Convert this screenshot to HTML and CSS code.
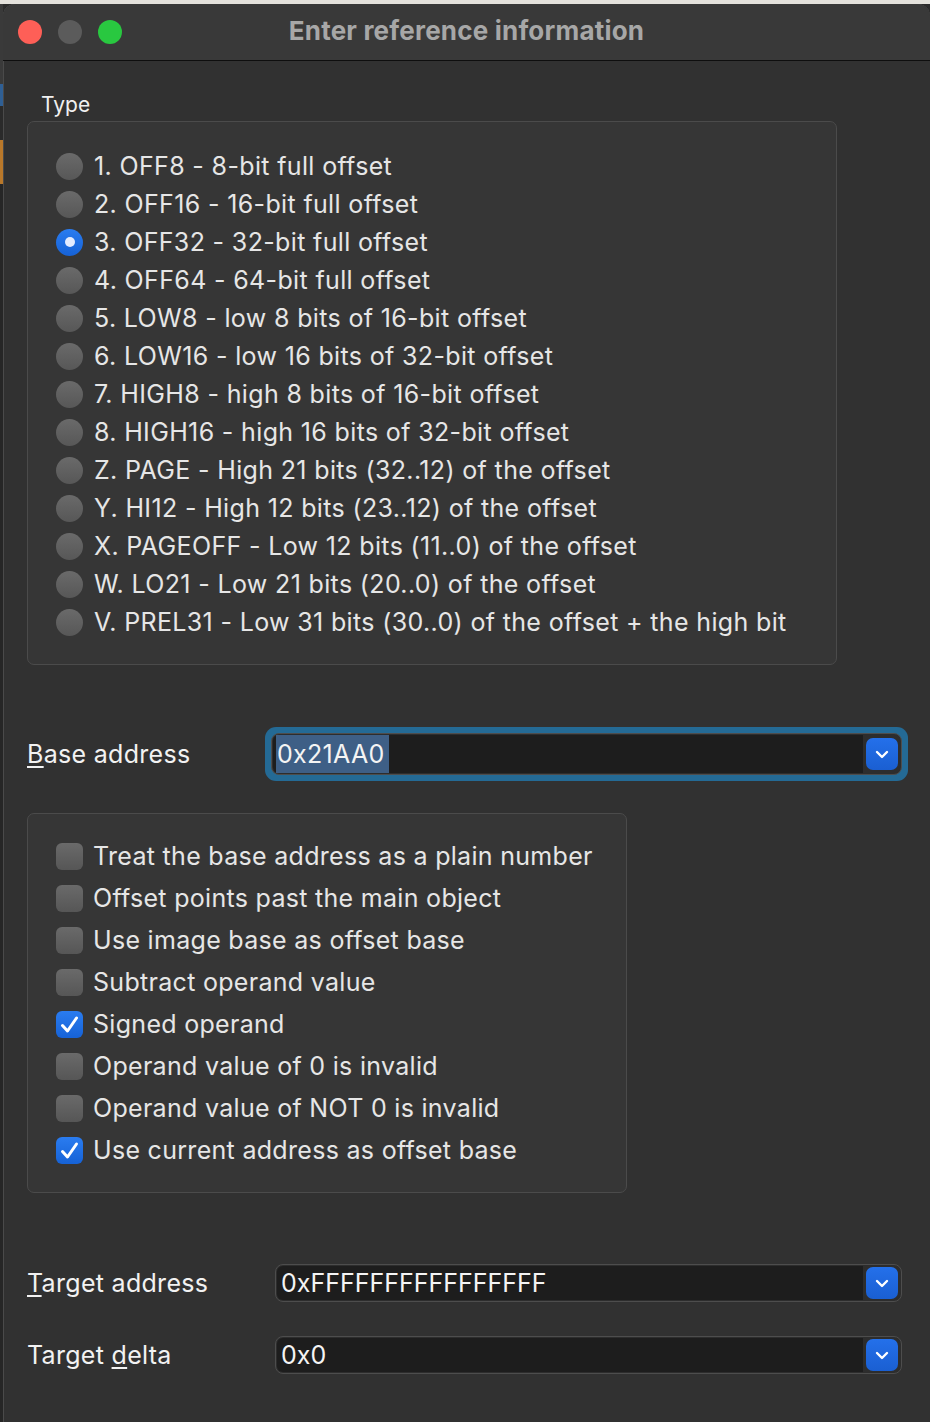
FILE: index.html
```html
<!DOCTYPE html>
<html lang="en">
<head>
<meta charset="utf-8">
<title>Enter reference information</title>
<link rel="stylesheet" href="styles.css">
</head>
<body>
<div class="screen">
  <div class="desk">
    <div class="behind"></div>
    <div class="window">
      <div class="titlebar">
        <div class="lights">
          <span class="light red"></span>
          <span class="light gray"></span>
          <span class="light green"></span>
        </div>
        <div class="title">Enter reference information</div>
        <div></div>
      </div>
      <div class="content">
        <div class="type-label">Type</div>
        <div class="group radios">
          <div class="row"><span class="radio"></span><span>1. OFF8 - 8-bit full offset</span></div>
          <div class="row"><span class="radio"></span><span>2. OFF16 - 16-bit full offset</span></div>
          <div class="row"><span class="radio on"></span><span>3. OFF32 - 32-bit full offset</span></div>
          <div class="row"><span class="radio"></span><span>4. OFF64 - 64-bit full offset</span></div>
          <div class="row"><span class="radio"></span><span>5. LOW8 - low 8 bits of 16-bit offset</span></div>
          <div class="row"><span class="radio"></span><span>6. LOW16 - low 16 bits of 32-bit offset</span></div>
          <div class="row"><span class="radio"></span><span>7. HIGH8 - high 8 bits of 16-bit offset</span></div>
          <div class="row"><span class="radio"></span><span>8. HIGH16 - high 16 bits of 32-bit offset</span></div>
          <div class="row"><span class="radio"></span><span>Z. PAGE - High 21 bits (32..12) of the offset</span></div>
          <div class="row"><span class="radio"></span><span>Y. HI12 - High 12 bits (23..12) of the offset</span></div>
          <div class="row"><span class="radio"></span><span>X. PAGEOFF - Low 12 bits (11..0) of the offset</span></div>
          <div class="row"><span class="radio"></span><span>W. LO21 - Low 21 bits (20..0) of the offset</span></div>
          <div class="row"><span class="radio"></span><span>V. PREL31 - Low 31 bits (30..0) of the offset + the high bit</span></div>
        </div>

        <div class="field-row base-row">
          <label class="flabel base-label"><u>B</u>ase address</label>
          <div class="focus-ring">
            <div class="combo">
              <div class="combo-text"><span class="sel">0x21AA0</span></div>
              <div class="combo-btn"><svg width="14" height="9" viewBox="0 0 14 9"><path d="M2 2l5 5 5-5" fill="none" stroke="#fff" stroke-width="2.4" stroke-linecap="round" stroke-linejoin="round"/></svg></div>
            </div>
          </div>
        </div>

        <div class="group checks">
          <div class="row crow"><span class="check"></span><span>Treat the base address as a plain number</span></div>
          <div class="row crow"><span class="check"></span><span>Offset points past the main object</span></div>
          <div class="row crow"><span class="check"></span><span>Use image base as offset base</span></div>
          <div class="row crow"><span class="check"></span><span>Subtract operand value</span></div>
          <div class="row crow"><span class="check on"><svg width="21" height="19" viewBox="0 0 21 19"><path d="M3.5 10.5l5 5.5L17.5 3" fill="none" stroke="#fff" stroke-width="3" stroke-linecap="round" stroke-linejoin="round"/></svg></span><span>Signed operand</span></div>
          <div class="row crow"><span class="check"></span><span>Operand value of 0 is invalid</span></div>
          <div class="row crow"><span class="check"></span><span>Operand value of NOT 0 is invalid</span></div>
          <div class="row crow"><span class="check on"><svg width="21" height="19" viewBox="0 0 21 19"><path d="M3.5 10.5l5 5.5L17.5 3" fill="none" stroke="#fff" stroke-width="3" stroke-linecap="round" stroke-linejoin="round"/></svg></span><span>Use current address as offset base</span></div>
        </div>

        <div class="field-row target-row">
          <label class="flabel target-label"><u>T</u>arget address</label>
          <div class="combo">
            <div class="combo-text">0xFFFFFFFFFFFFFFFF</div>
            <div class="combo-btn"><svg width="14" height="9" viewBox="0 0 14 9"><path d="M2 2l5 5 5-5" fill="none" stroke="#fff" stroke-width="2.4" stroke-linecap="round" stroke-linejoin="round"/></svg></div>
          </div>
        </div>

        <div class="field-row delta-row">
          <label class="flabel target-label">Target <u>d</u>elta</label>
          <div class="combo">
            <div class="combo-text">0x0</div>
            <div class="combo-btn"><svg width="14" height="9" viewBox="0 0 14 9"><path d="M2 2l5 5 5-5" fill="none" stroke="#fff" stroke-width="2.4" stroke-linecap="round" stroke-linejoin="round"/></svg></div>
          </div>
        </div>
      </div>
    </div>
  </div>
</div>
</body>
</html>
```

FILE: styles.css
```css
* { box-sizing: border-box; }
html, body {
  margin: 0;
  padding: 0;
  background: #313131;
}
body {
  font-family: Inter, "Open Sans", "Liberation Sans", sans-serif;
  color: #e6e6e6;
}
.screen {
  width: 930px;
  height: 1422px;
  overflow: hidden;
  background: #e4e2dc;
  padding-top: 4px;
}
.desk {
  display: flex;
  height: 1418px;
  background: #2c2c2c;
}
.behind {
  width: 3px;
  flex: none;
  background: linear-gradient(to bottom, #3a3a3a 0, #3a3a3a 80px, #2f5f94 80px, #2f5f94 102px, #2a2a2a 102px, #2a2a2a 136px, #b9782a 136px, #b9782a 180px, #262626 180px);
}
.window {
  flex: 1;
  background: #313131;
  border-radius: 12px 12px 0 0;
  overflow: hidden;
  box-shadow: inset 0 1px 0 #555, inset 1px 0 0 #4a4a4a;
}
.titlebar {
  height: 57px;
  background: #393939;
  border-bottom: 1px solid #0e0e0e;
  display: grid;
  grid-template-columns: 1fr auto 1fr;
  align-items: center;
}
.lights {
  display: flex;
  gap: 16px;
  padding-left: 15px;
}
.light {
  width: 24px;
  height: 24px;
  border-radius: 50%;
  display: block;
}
.red { background: #fe5f57; }
.gray { background: #5b5b5b; }
.green { background: #29c840; }
.title {
  font-weight: 700;
  font-size: 26px;
  line-height: 30px;
  color: #a7a7a7;
  letter-spacing: 0.2px;
  margin-top: -2px;
}
.content {
  padding: 32px 22px 0 24px;
}
.type-label {
  font-size: 21px;
  line-height: 24px;
  margin-left: 14px;
  margin-bottom: 4px;
  color: #f0f0f0;
}
.group {
  background: #363636;
  border: 1px solid #4b4b4b;
  border-radius: 7px;
}
.radios {
  width: 810px;
  padding: 25px 0 23px 28px;
}
.row {
  display: flex;
  align-items: center;
  height: 38px;
  font-size: 25px;
  letter-spacing: 0.35px;
  white-space: nowrap;
}
.radio {
  width: 27px;
  height: 27px;
  border-radius: 50%;
  background: linear-gradient(to bottom, #6a6a6a, #575757);
  margin-right: 11px;
  flex: none;
  position: relative;
}
.radio.on {
  background: linear-gradient(to bottom, #2a7cf0, #1662d6);
}
.radio.on::after {
  content: "";
  position: absolute;
  left: 8.5px;
  top: 8.5px;
  width: 10px;
  height: 10px;
  border-radius: 50%;
  background: #e4ecff;
}
.field-row {
  display: flex;
  align-items: center;
}
.flabel {
  font-size: 25px;
  letter-spacing: 0.3px;
  flex: none;
  color: #f2f2f2;
}
.flabel u {
  text-decoration-thickness: 2px;
  text-underline-offset: 3px;
}
.base-row {
  margin-top: 62px;
}
.base-label {
  width: 238px;
}
.focus-ring {
  flex: 1;
  background: #246a95;
  border-radius: 11px;
  padding: 6px;
}
.combo {
  flex: 1;
  display: flex;
  align-items: center;
  height: 38px;
  border: 1px solid #4d4d4d;
  border-radius: 8px;
  background: #2d2d2d;
  padding: 0 3px 0 1px;
}
.focus-ring .combo {
  height: 42px;
}
.combo-text {
  flex: 1;
  align-self: stretch;
  margin: 1px 3px 1px 0;
  background: #1d1d1d;
  border-radius: 6px 0 0 6px;
  font-size: 25px;
  color: #f4f4f4;
  display: flex;
  align-items: center;
  padding-left: 4px;
}
.sel {
  background: #3e5f86;
  align-self: stretch;
  display: flex;
  align-items: center;
  padding: 0 4px 0 1px;
  margin-left: -1px;
  letter-spacing: 0.3px;
}
.combo-btn {
  width: 32px;
  height: 32px;
  flex: none;
  border-radius: 7px;
  background: linear-gradient(to bottom, #2470ea, #1a5fd2);
  display: flex;
  align-items: center;
  justify-content: center;
}
.checks {
  width: 600px;
  margin-top: 32px;
  padding: 21px 0 21px 28px;
}
.crow {
  height: 42px;
  letter-spacing: 0.3px;
}
.check {
  width: 27px;
  height: 27px;
  border-radius: 6px;
  background: linear-gradient(to bottom, #6a6a6a, #565656);
  margin-right: 10px;
  flex: none;
  display: flex;
  align-items: center;
  justify-content: center;
}
.check.on {
  background: linear-gradient(to bottom, #2a7cf0, #1662d6);
}
.target-label {
  width: 248px;
}
.target-row {
  margin-top: 71px;
  margin-right: 6px;
}
.delta-row {
  margin-top: 34px;
  margin-right: 6px;
}
```
